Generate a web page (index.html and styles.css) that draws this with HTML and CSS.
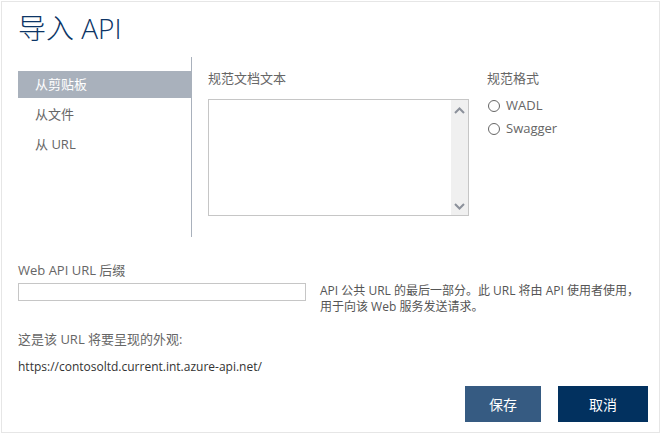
FILE: index.html
```html
<!DOCTYPE html>
<html lang="zh-CN">
<head>
<meta charset="utf-8">
<title>导入 API</title>
<link rel="stylesheet" href="styles.css">
</head>
<body>
<div class="dialog">
  <h1 class="title">导入 API</h1>
  <div class="main">
    <ul class="nav">
      <li class="nav-item active">从剪贴板</li>
      <li class="nav-item">从文件</li>
      <li class="nav-item">从 URL</li>
    </ul>
    <div class="spec">
      <div class="label">规范文档文本</div>
      <div class="textbox">
        <div class="textbox-body"></div>
        <div class="scrollbar">
          <svg class="arrow" width="11" height="7" viewBox="0 0 11 7"><path d="M1 6 L5.5 1.5 L10 6" fill="none" stroke="#8c919b" stroke-width="2"/></svg>
          <svg class="arrow" width="11" height="7" viewBox="0 0 11 7"><path d="M1 1 L5.5 5.5 L10 1" fill="none" stroke="#8c919b" stroke-width="2"/></svg>
        </div>
      </div>
    </div>
    <div class="format">
      <div class="label">规范格式</div>
      <label class="radio"><span class="circle"></span>WADL</label>
      <label class="radio"><span class="circle"></span>Swagger</label>
    </div>
  </div>
  <div class="suffix">
    <div class="label">Web API URL 后缀</div>
    <div class="suffix-row">
      <div class="input"></div>
      <p class="help">API 公共 URL 的最后一部分。此 URL 将由 API 使用者使用，<br>用于向该 Web 服务发送请求。</p>
    </div>
    <div class="label preview-label">这是该 URL 将要呈现的外观:</div>
    <div class="preview-url">https://contosoltd.current.int.azure-api.net/</div>
  </div>
  <div class="footer">
    <button class="btn btn-save">保存</button>
    <button class="btn btn-cancel">取消</button>
  </div>
</div>
</body>
</html>
```

FILE: styles.css
```css
* { box-sizing: border-box; }
html, body { margin: 0; padding: 0; background: #ffffff; }
body {
  font-family: "Open Sans", "Noto Sans CJK SC", sans-serif;
  color: #666666;
  padding: 1px 0 0 1px;
}
.dialog {
  width: 659px;
  height: 432px;
  border: 1px solid #e6e6e6;
  padding: 0 11px 0 16px;
  display: flex;
  flex-direction: column;
}
.title {
  margin: 0;
  padding-top: 8px;
  font-size: 28px;
  line-height: 36px;
  font-weight: 300;
  color: #0c3566;
  height: 55px;
}
.main {
  display: flex;
  height: 180px;
}
.nav {
  list-style: none;
  margin: 0;
  padding: 14px 0 0 0;
  width: 174px;
  border-right: 1px solid #a9b1bc;
}
.nav-item {
  height: 27px;
  line-height: 27px;
  margin-bottom: 3px;
  padding-left: 17px;
  font-size: 13px;
  color: #666666;
}
.nav-item.active {
  background: #a9b1bc;
  color: #ffffff;
}
.label {
  font-size: 13px;
  line-height: 20px;
  color: #666666;
}
.spec {
  margin-left: 16px;
  padding-top: 11px;
}
.spec .label { margin-bottom: 11px; }
.textbox {
  width: 261px;
  height: 117px;
  border: 1px solid #c6c6c6;
  display: flex;
}
.textbox-body { flex: 1; }
.scrollbar {
  width: 17px;
  background: #f0f0f0;
  display: flex;
  flex-direction: column;
  justify-content: space-between;
  align-items: center;
  padding: 7px 0 5px;
}
.format {
  margin-left: 18px;
  padding-top: 11px;
}
.format .label { margin-bottom: 6px; }
.radio {
  display: flex;
  align-items: center;
  font-size: 13px;
  line-height: 23px;
  height: 23px;
  color: #666666;
}
.circle {
  width: 12px;
  height: 12px;
  border: 1px solid #666666;
  border-radius: 50%;
  margin: 0 6px 0 1px;
}
.suffix { padding-top: 23px; }
.suffix-row {
  display: flex;
  margin-top: 3px;
}
.input {
  width: 288px;
  height: 18px;
  border: 1px solid #c6c6c6;
  flex: none;
}
.help {
  margin: 0 0 0 14px;
  font-size: 12px;
  line-height: 16px;
  color: #555555;
}
.preview-label { margin-top: 14px; }
.preview-url {
  margin-top: 8px;
  font-size: 12px;
  line-height: 20px;
  color: #333333;
}
.footer {
  margin-top: auto;
  margin-bottom: 10px;
  display: flex;
  justify-content: flex-end;
  gap: 17px;
}
.btn {
  border: none;
  height: 36px;
  color: #ffffff;
  font-family: "Open Sans", "Noto Sans CJK SC", sans-serif;
  font-size: 14px;
  padding: 0;
}
.btn-save { width: 76px; background: #365b82; }
.btn-cancel { width: 90px; background: #02315f; }
```
